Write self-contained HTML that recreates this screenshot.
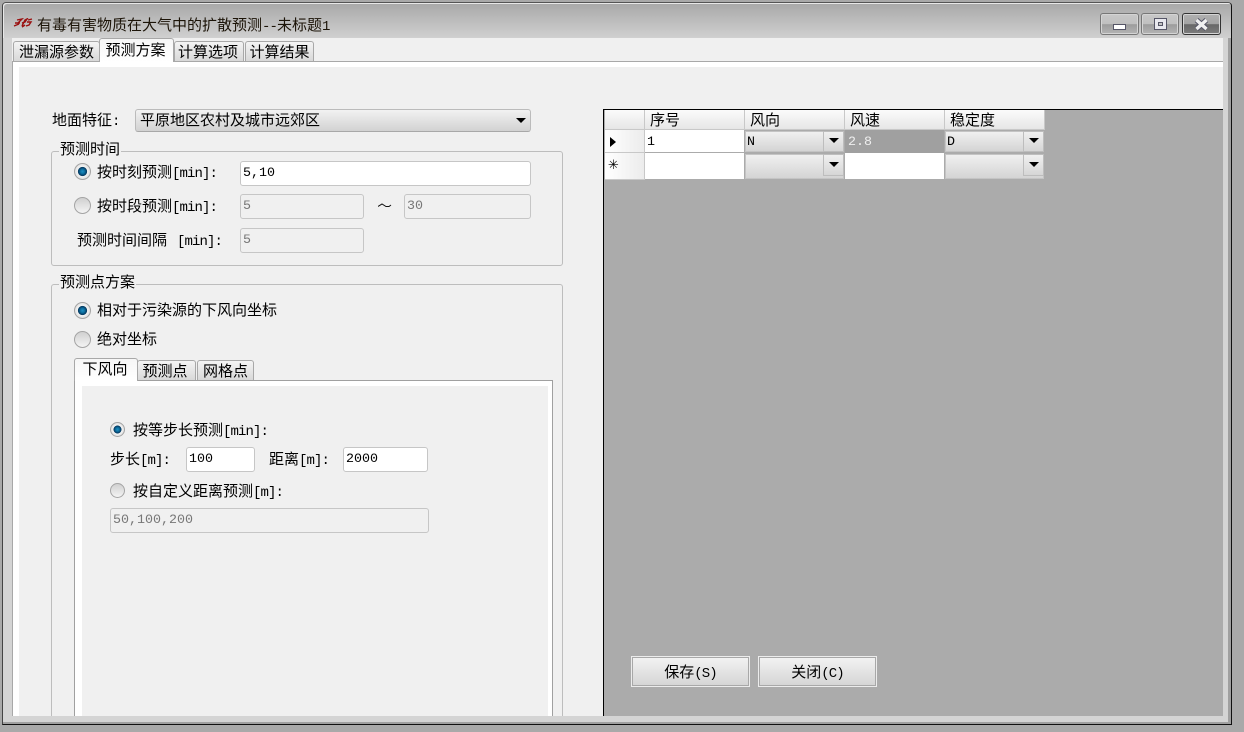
<!DOCTYPE html>
<html><head><meta charset="utf-8"><style>
html,body{margin:0;padding:0;width:1244px;height:732px;overflow:hidden;background:#a9a9a9}
body{position:relative;font-family:"WenQuanYi Zen Hei","Noto Sans CJK SC",sans-serif;font-size:15px;color:#000}
div{position:absolute;box-sizing:border-box}
.t{white-space:nowrap;line-height:18px;height:18px}
.t i,.b{font-family:"Liberation Mono",monospace;font-style:normal;font-size:14px;letter-spacing:-.9px}
.m{font-family:"Liberation Mono",monospace;font-size:13.33px}
.tab{background:linear-gradient(#f4f4f4,#d8d8d8);border:1px solid #a8a8a8;border-bottom:none;border-radius:3px 3px 0 0;text-align:center;white-space:nowrap;line-height:20px}
.on{background:linear-gradient(#f6f6f6,#fff)}
.inp{background:#fff;border:1px solid #c6c6c6;border-radius:3px;padding-left:2px;line-height:23px;font-family:"Liberation Mono",monospace;font-size:13.33px}
.dis{background:#f0f0f0;color:#777}
.grp{border:1px solid #bdbdbd;border-radius:3px}
.lg{background:#f0f0f0;padding:0 1px}
.r{width:17px;height:17px;border-radius:50%;border:1px solid #a4a4a4;background:linear-gradient(#d0d0d0,#f4f4f4)}
.r.c{background:radial-gradient(circle closest-side at 50% 50%,#1f8fc4 0,#0c6f9f 30%,#07406a 52%,#063a5e 58%,#f4f4f4 64%,#e2e2e2 100%)}
.r.s{width:15px;height:15px}
.h{background:linear-gradient(#fbfbfb,#e6e6e6);border-right:1px solid #c8c8c8;border-bottom:1px solid #c8c8c8;line-height:19px;padding-left:5px;white-space:nowrap}
.c1{background:#fff}
.cb{background:linear-gradient(#f0f0f0,#d4d4d4);border:1px solid #c4c4c4;font-family:"Liberation Mono",monospace;font-size:13.33px;line-height:21px;padding-left:1px}
.cbb{background:linear-gradient(#f0f0f0,#d6d6d6);border:1px solid #bdbdbd}
.a{width:0;height:0;border-left:5px solid transparent;border-right:5px solid transparent;border-top:5px solid #000}
.btn{background:linear-gradient(#f3f3f3,#d4d4d4);border:1px solid #ececec;box-shadow:inset 0 0 0 1px #a8a8a8;text-align:center;line-height:29px;white-space:nowrap}
.w{height:22px;border:1px solid #777;border-radius:3px;background:linear-gradient(#c8c8c8 0,#c0c0c0 50%,#9c9c9c 52%,#b4b4b4 100%);box-shadow:inset 0 0 0 1px #d4d4d4}
</style></head><body>
<!-- frame -->
<div style="left:2px;top:2px;width:1230px;height:723px;border:1px solid #111;border-top-color:#555;border-left-color:#444;border-radius:4px 4px 0 0;background:#d4d4d4"></div>
<div style="left:3px;top:3px;width:1228px;height:35px;background:linear-gradient(#a8a8a8,#d0d0d0);border-radius:3px 3px 0 0;box-shadow:inset 1px 1px 0 #e8e8e8"></div>
<div style="left:3px;top:38px;width:9px;height:686px;background:#d4d4d4"></div>
<div style="left:1228px;top:38px;width:3px;height:686px;background:#a0a0a0"></div>
<div style="left:1223px;top:38px;width:5px;height:686px;background:#d4d4d4"></div>
<div style="left:3px;top:722px;width:1228px;height:2px;background:#a0a0a0"></div>
<!-- title -->
<svg style="position:absolute;left:13px;top:18px" width="20" height="11" viewBox="0 0 20 11"><path d="M1 8L6 6M4 2L9 1L5 5M2 5L7 5M9 8L12 2L14 1L12 4L9 5M9 9L12 7M15 2L19 1M14 4L18 4L16 7L13 8" stroke="#9a1010" stroke-width="1.4" fill="none"/></svg>
<div class="t" style="left:37px;top:16px;color:#1c1408">有毒有害物质在大气中的扩散预测<i>--</i>未标题<i>1</i></div>
<!-- window buttons -->
<div class="w" style="left:1100px;top:13px;width:39px"></div>
<div style="left:1113px;top:24px;width:13px;height:6px;background:#fff;border:1px solid #556"></div>
<div class="w" style="left:1141px;top:13px;width:38px"></div>
<div style="left:1154px;top:18px;width:13px;height:12px;background:#e8e8ee;border:1px solid #556"></div>
<div style="left:1158px;top:22px;width:5px;height:4px;background:#c4c4c4;border:1px solid #556"></div>
<div class="w" style="left:1182px;top:13px;width:39px;border-color:#333;background:linear-gradient(#b0b0b0 0,#a4a4a4 50%,#686868 52%,#7c7c7c 100%)"></div>
<svg style="position:absolute;left:1194px;top:18px" width="15" height="13" viewBox="0 0 15 13"><path d="M2.5 2L12.5 11M12.5 2L2.5 11" stroke="#556" stroke-width="5.4"/><path d="M2.5 2L12.5 11M12.5 2L2.5 11" stroke="#f0f0f0" stroke-width="3.4"/></svg>
<!-- client -->
<div style="left:12px;top:38px;width:1211px;height:678px;background:#f0f0f0"></div>
<div style="left:12px;top:61px;width:1211px;height:1px;background:#a8a8a8"></div>
<div style="left:12px;top:62px;width:1211px;height:5px;background:#fff"></div>
<div style="left:12px;top:61px;width:1px;height:655px;background:#a8a8a8"></div>
<div style="left:13px;top:62px;width:6px;height:654px;background:#fff"></div>
<div class="tab" style="left:13px;top:41px;width:87px;height:20px">泄漏源参数</div>
<div class="tab on" style="left:99px;top:38px;width:75px;height:24px;line-height:22px;border-bottom:0;z-index:2;padding-right:2px">预测方案</div>
<div class="tab" style="left:174px;top:41px;width:70px;height:20px;padding-right:2px">计算选项</div>
<div class="tab" style="left:245px;top:41px;width:69px;height:20px">计算结果</div>
<!-- ground -->
<div class="t" style="left:52px;top:111px">地面特征<i>:</i></div>
<div style="left:135px;top:109px;width:396px;height:23px;background:linear-gradient(#f2f2f2,#d2d2d2);border:1px solid #bbb;border-bottom-color:#a8a8a8;border-radius:3px"></div>
<div class="t" style="left:140px;top:111px">平原地区农村及城市远郊区</div>
<div class="a" style="left:516px;top:118px"></div>
<!-- group 1 -->
<div class="grp" style="left:51px;top:151px;width:512px;height:115px"></div>
<div class="t lg" style="left:59px;top:140px">预测时间</div>
<div class="r c" style="left:74px;top:163px"></div>
<div class="t" style="left:97px;top:163px">按时刻预测<i>[min]:</i></div>
<div class="inp" style="left:240px;top:161px;width:291px;height:25px">5,10</div>
<div class="r" style="left:74px;top:197px"></div>
<div class="t" style="left:97px;top:197px">按时段预测<i>[min]:</i></div>
<div class="inp dis" style="left:240px;top:194px;width:124px;height:25px">5</div>
<svg style="position:absolute;left:378px;top:202px" width="14" height="7" viewBox="0 0 14 7"><path d="M0 4.5L4 2L8 4.5L11 4.5L13 3" stroke="#111" fill="none"/></svg>
<div class="inp dis" style="left:404px;top:194px;width:127px;height:25px">30</div>
<div class="t" style="left:77px;top:231px">预测时间间隔<i style="margin-left:10px">[min]:</i></div>
<div class="inp dis" style="left:240px;top:228px;width:124px;height:25px">5</div>
<!-- group 2 -->
<div style="left:51px;top:284px;width:512px;height:432px;border:1px solid #bdbdbd;border-bottom:none;border-radius:3px 3px 0 0"></div>
<div class="t lg" style="left:59px;top:273px">预测点方案</div>
<div class="r c" style="left:74px;top:302px"></div>
<div class="t" style="left:97px;top:301px">相对于污染源的下风向坐标</div>
<div class="r" style="left:74px;top:331px"></div>
<div class="t" style="left:97px;top:330px">绝对坐标</div>
<!-- sub tabs -->
<div style="left:74px;top:380px;width:479px;height:336px;border:1px solid #a0a0a0;border-bottom:none;background:#fff"></div>
<div style="left:82px;top:386px;width:466px;height:330px;background:#f0f0f0"></div>
<div class="tab" style="left:137px;top:360px;width:59px;height:20px;padding-right:3px">预测点</div>
<div class="tab" style="left:197px;top:360px;width:57px;height:20px">网格点</div>
<div class="tab on" style="left:74px;top:358px;width:64px;height:23px;padding-right:2px">下风向</div>
<div class="r c s" style="left:110px;top:422px"></div>
<div class="t" style="left:133px;top:421px">按等步长预测<i>[min]:</i></div>
<div class="t" style="left:110px;top:450px">步长<i>[m]:</i></div>
<div class="inp" style="left:186px;top:447px;width:69px;height:25px">100</div>
<div class="t" style="left:269px;top:450px">距离<i>[m]:</i></div>
<div class="inp" style="left:343px;top:447px;width:85px;height:25px">2000</div>
<div class="r s" style="left:110px;top:483px"></div>
<div class="t" style="left:133px;top:482px">按自定义距离预测<i>[m]:</i></div>
<div class="inp dis" style="left:110px;top:508px;width:319px;height:25px">50,100,200</div>
<!-- right panel -->
<div style="left:603px;top:109px;width:620px;height:607px;background:#ababab;border-left:1px solid #000;border-top:1px solid #000"></div>
<div class="h" style="left:605px;top:110px;width:40px;height:20px"></div>
<div class="h" style="left:645px;top:110px;width:100px;height:20px">序号</div>
<div class="h" style="left:745px;top:110px;width:100px;height:20px">风向</div>
<div class="h" style="left:845px;top:110px;width:100px;height:20px">风速</div>
<div class="h" style="left:945px;top:110px;width:100px;height:20px">稳定度</div>
<div class="h" style="left:605px;top:130px;width:40px;height:23px;background:linear-gradient(90deg,#fff,#ececec)"></div>
<div class="h" style="left:605px;top:153px;width:40px;height:27px;background:linear-gradient(90deg,#fff,#ececec)"></div>
<div style="left:610px;top:137px;width:0;height:0;border-top:5px solid transparent;border-bottom:5px solid transparent;border-left:6px solid #000"></div>
<div class="t" style="left:608px;top:157px;font-family:'DejaVu Sans',sans-serif;font-size:13px">✳</div>
<div class="c1 m" style="left:645px;top:130px;width:99px;height:22px;line-height:25px;padding-left:2px">1</div>
<div class="c1" style="left:645px;top:153px;width:99px;height:26px"></div>
<div class="cb" style="left:745px;top:131px;width:99px;height:21px">N</div>
<div class="cbb" style="left:823px;top:131px;width:21px;height:21px"></div>
<div class="a" style="left:829px;top:138px"></div>
<div class="cb" style="left:745px;top:154px;width:99px;height:25px"></div>
<div class="cbb" style="left:823px;top:154px;width:21px;height:22px"></div>
<div class="a" style="left:829px;top:162px"></div>
<div class="m" style="left:845px;top:130px;width:99px;height:23px;background:#a0a0a0;color:#eee;line-height:25px;padding-left:3px">2.8</div>
<div class="c1" style="left:845px;top:153px;width:99px;height:26px"></div>
<div class="cb" style="left:945px;top:131px;width:99px;height:21px">D</div>
<div class="cbb" style="left:1023px;top:131px;width:21px;height:21px"></div>
<div class="a" style="left:1029px;top:138px"></div>
<div class="cb" style="left:945px;top:154px;width:99px;height:25px"></div>
<div class="cbb" style="left:1023px;top:154px;width:21px;height:22px"></div>
<div class="a" style="left:1029px;top:162px"></div>
<div class="btn" style="left:631px;top:656px;width:119px;height:31px">保存<span class="b">(S)</span></div>
<div class="btn" style="left:758px;top:656px;width:119px;height:31px">关闭<span class="b">(C)</span></div>
</body></html>
